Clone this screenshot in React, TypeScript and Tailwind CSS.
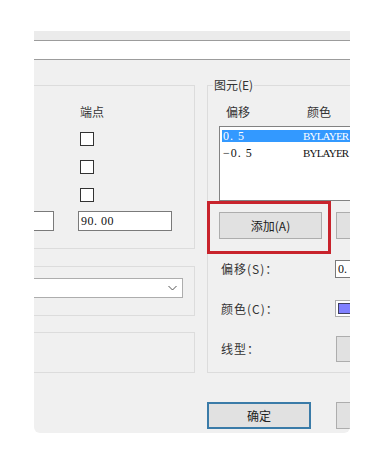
import React from "react";

const cjk = { fontFamily: '"Noto Sans CJK SC", "Noto Sans", sans-serif' };
const serif = { fontFamily: '"Liberation Serif", "Noto Sans CJK SC", serif' };

function CheckBox() {
  return <div className="w-[14px] h-[14px] border border-[#333] bg-white" />;
}

function WinButton({ label, wide }: { label?: string; wide?: boolean }) {
  return (
    <div
      className={
        "h-[27px] bg-[#e1e1e1] border border-[#adadad] flex items-center justify-center text-[12px] text-[#222] " +
        (wide ? "w-[103px]" : "w-[60px]")
      }
      style={cjk}
    >
      {label}
    </div>
  );
}

export default function App() {
  return (
    <div className="w-[388px] h-[449px] bg-white pt-[31px] overflow-hidden">
      <div className="ml-[34px] w-[316px] h-[402px] bg-[#f0f0f0] rounded-b-[6px] overflow-hidden">
        {/* header strips */}
        <div className="h-[10px] bg-[#ebebeb] border-b border-[#9c9c9c]" />
        <div className="h-[19px] bg-white border-b border-[#9c9c9c]" />

        <div className="flex pt-[25px]">
          {/* left column */}
          <div className="w-[161px] shrink-0 flex flex-col">
            <div className="h-[164px] border-t border-r border-b border-[#dcdcdc] pt-[18px]">
              <div className="pl-[46px] text-[12px] leading-[16px] text-[#333]" style={cjk}>
                端点
              </div>
              <div className="pl-[46px] pt-[12px] flex flex-col gap-[14px]">
                <CheckBox />
                <CheckBox />
                <CheckBox />
              </div>
              <div className="flex mt-[9px]">
                <div className="w-[20px] h-[20px] bg-white border-t border-r border-b border-[#7a7a7a]" />
                <div
                  className="ml-[24px] w-[94px] h-[20px] bg-white border border-[#7a7a7a] flex items-center pl-[2px] text-[12px] text-[#111] tracking-[0.5px]"
                  style={serif}
                >
                  90. 00
                </div>
              </div>
            </div>

            <div className="mt-[17px] h-[50px] border-t border-r border-b border-[#dcdcdc] pt-[11px]">
              <div className="w-[149px] h-[20px] bg-white border-t border-r border-b border-[#adadad] flex items-center justify-end pr-[5px]">
                <svg width="9" height="6" viewBox="0 0 9 6">
                  <path d="M0.5 1 L4.5 5 L8.5 1" fill="none" stroke="#555" strokeWidth="1" />
                </svg>
              </div>
            </div>

            <div className="mt-[16px] h-[41px] border-t border-r border-b border-[#dcdcdc]" />
          </div>

          {/* right column */}
          <div className="ml-[12px] flex-1 flex flex-col">
            <div className="relative w-[200px] h-[288px] border border-[#dcdcdc] pt-[18px]">
              <span
                className="absolute -top-[9px] left-[5px] bg-[#f0f0f0] px-[1px] text-[12px] leading-[16px] text-[#333]"
                style={cjk}
              >
                图元(E)
              </span>
              <div className="flex text-[12px] leading-[16px] text-[#333]" style={cjk}>
                <span className="ml-[18px] w-[81px]">偏移</span>
                <span>颜色</span>
              </div>
              <div className="ml-[11px] mt-[6px] w-[190px] h-[75px] bg-white border border-[#828282] pt-[3px] pl-[2px]">
                <div
                  className="flex h-[12px] items-center bg-[#3399ff] text-white text-[12px] leading-[12px]"
                  style={serif}
                >
                  <span className="w-[81px] pl-[1px] tracking-[1px]">0. 5</span>
                  <span className="text-[11px] tracking-[-0.8px]">BYLAYER</span>
                </div>
                <div
                  className="flex h-[12px] mt-[5px] items-center text-[#111] text-[12px] leading-[12px]"
                  style={serif}
                >
                  <span className="w-[81px] pl-[1px] tracking-[1px]">−0. 5</span>
                  <span className="text-[11px] tracking-[-0.8px]">BYLAYER</span>
                </div>
              </div>

              <div className="ml-[11px] mt-[11px] flex gap-[14px]">
                <WinButton label="添加(A)" wide />
                <WinButton />
              </div>

              {/* red highlight */}
              <div className="absolute left-[-1px] top-[115px] w-[124px] h-[53px] border-[3px] border-[#c8232c]" />

              <div className="mt-[21px] flex items-center h-[18px]">
                <span className="ml-[13px] w-[114px] text-[12px] text-[#333] tracking-[1px]" style={cjk}>
                  偏移(S)：
                </span>
                <div
                  className="w-[60px] h-[18px] bg-white border border-[#7a7a7a] text-[12px] leading-[16px] pl-[2px] text-[#111]"
                  style={serif}
                >
                  0.
                </div>
              </div>

              <div className="mt-[22px] flex items-center h-[17px]">
                <span className="ml-[13px] w-[114px] text-[12px] text-[#333] tracking-[1px]" style={cjk}>
                  颜色(C)：
                </span>
                <div className="w-[60px] h-[17px] bg-white border border-[#adadad] pt-[2px] pl-[2px]">
                  <div className="w-[14px] h-[11px] bg-[#8080ff] border border-[#404060]" />
                </div>
              </div>

              <div className="mt-[19px] flex items-center h-[26px]">
                <span className="ml-[13px] w-[115px] text-[12px] text-[#333] tracking-[1px]" style={cjk}>
                  线型：
                </span>
                <div className="w-[60px] h-[26px] bg-[#e1e1e1] border border-[#adadad]" />
              </div>
            </div>

            <div className="mt-[29px] flex gap-[25px]">
              <div
                className="w-[104px] h-[27px] bg-[#e1e1e1] border-2 border-[#3a7ba8] flex items-center justify-center text-[12px] text-[#222]"
                style={cjk}
              >
                确定
              </div>
              <div className="w-[60px] h-[27px] bg-[#e1e1e1] border border-[#adadad]" />
            </div>
          </div>
        </div>
      </div>
    </div>
  );
}
